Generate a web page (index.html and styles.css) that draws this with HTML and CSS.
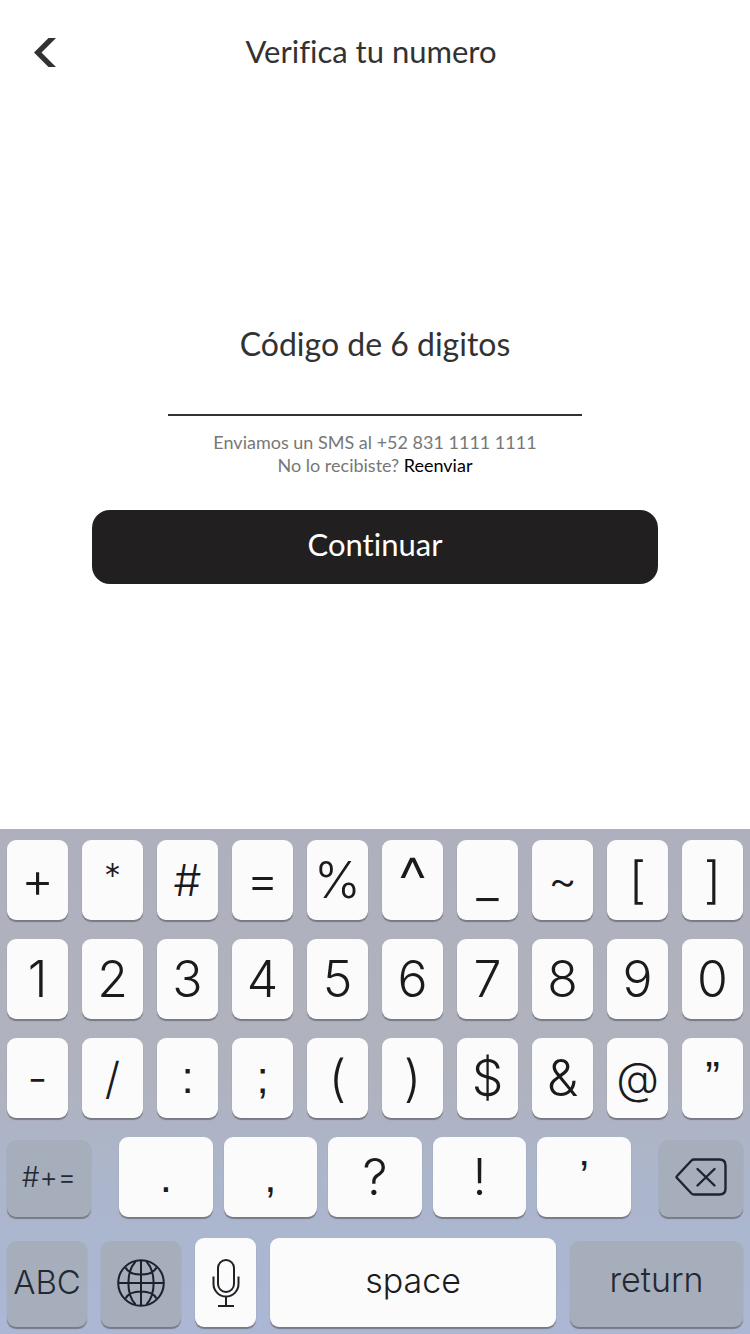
FILE: index.html
```html
<!DOCTYPE html>
<html lang="es">
<head>
<meta charset="utf-8">
<meta name="viewport" content="width=device-width, initial-scale=1">
<title>Verifica tu numero</title>
<link rel="stylesheet" href="styles.css">
</head>
<body class="screen">
<header class="topbar">
  <button class="back" type="button" aria-label="Atrás">
    <svg class="back-icon" viewBox="0 0 22 29" aria-hidden="true"><path d="M14.500 0H22L7.500 14.500 22 29h-7.500L0 14.500z" fill="#323233"/></svg>
  </button>
  <h1 class="title">Verifica tu numero</h1>
</header>
<main class="content">
  <form class="verify">
    <label class="code-label" for="code">Código de 6 digitos</label>
    <input class="code-input" id="code" type="text" inputmode="numeric" maxlength="6" autocomplete="one-time-code">
    <p class="hint">Enviamos un SMS al +52 831 1111 1111<br>No lo recibiste? <a class="resend" href="#">Reenviar</a></p>
    <button class="submit" type="button">Continuar</button>
  </form>
</main>
<section class="keyboard" aria-label="Teclado">
  <div class="row">
    <button class="key" type="button">+</button>
    <button class="key key-star" type="button">*</button>
    <button class="key key-compact" type="button">#</button>
    <button class="key" type="button">=</button>
    <button class="key" type="button">%</button>
    <button class="key key-caret" type="button">^</button>
    <button class="key" type="button">_</button>
    <button class="key key-compact" type="button">~</button>
    <button class="key" type="button">[</button>
    <button class="key" type="button">]</button>
  </div>
  <div class="row">
    <button class="key" type="button">1</button>
    <button class="key" type="button">2</button>
    <button class="key" type="button">3</button>
    <button class="key" type="button">4</button>
    <button class="key" type="button">5</button>
    <button class="key" type="button">6</button>
    <button class="key" type="button">7</button>
    <button class="key" type="button">8</button>
    <button class="key" type="button">9</button>
    <button class="key" type="button">0</button>
  </div>
  <div class="row">
    <button class="key key-compact" type="button">-</button>
    <button class="key key-compact" type="button">/</button>
    <button class="key key-mark" type="button">:</button>
    <button class="key key-mark" type="button">;</button>
    <button class="key" type="button">(</button>
    <button class="key" type="button">)</button>
    <button class="key" type="button">$</button>
    <button class="key" type="button">&amp;</button>
    <button class="key key-compact" type="button">@</button>
    <button class="key key-mark" type="button">”</button>
  </div>
  <div class="row row-punct">
    <button class="key key-fn key-symbols" type="button">#+=</button>
    <div class="punct">
      <button class="key key-mark" type="button">.</button>
      <button class="key key-mark" type="button">,</button>
      <button class="key" type="button">?</button>
      <button class="key" type="button">!</button>
      <button class="key key-mark" type="button">’</button>
    </div>
    <button class="key key-fn" type="button" aria-label="Borrar">
      <svg class="icon-delete" viewBox="0 0 52 38" aria-hidden="true" fill="none" stroke="#202431" stroke-width="2.400" stroke-linejoin="round" stroke-linecap="round"><path d="M19 1.500h25.500q6 0 6 6v23q0 6-6 6H19q-1.500 0-2.500-1L2 20q-1-1 0-2L16.500 2.500q1-1 2.500-1z"/><path d="M22.500 11l17 16.500M39.500 11l-17 16.500"/></svg>
    </button>
  </div>
  <div class="row row-bottom">
    <button class="key key-fn key-abc" type="button">ABC</button>
    <button class="key key-fn key-globe" type="button" aria-label="Cambiar idioma">
      <svg class="icon-globe" viewBox="0 0 48 48" aria-hidden="true" fill="none" stroke="#1d212c" stroke-width="2"><circle cx="24" cy="24" r="22.800"/><path d="M24 1.500v45M1.500 24h45M8.500 8.500Q12 15.500 24 15.500T39.500 8.500M8.500 39.500Q12 32.500 24 32.500T39.500 39.500M18.500 2.500C9 13 9 35 18.500 45.500M29.500 2.500C39 13 39 35 29.500 45.500"/></svg>
    </button>
    <button class="key" type="button" aria-label="Dictado">
      <svg class="icon-mic" viewBox="0 0 28 48" aria-hidden="true" fill="none" stroke="#202124" stroke-width="2"><rect x="6" y="1" width="16" height="32" rx="8"/><path d="M1.500 17.500V25a12.500 12.500 0 0 0 25 0v-7.500M14 37.500V47M6 47h16"/></svg>
    </button>
    <button class="key key-word" type="button">space</button>
    <button class="key key-fn key-word" type="button">return</button>
  </div>
</section>
</body>
</html>
```
FILE: styles.css
```css
* {
  box-sizing: border-box;
}

.screen {
  display: flex;
  flex-direction: column;
  min-height: 100vh;
  margin: 0;
  background: #fff;
  color: #323233;
  font-family: Lato, "Open Sans", sans-serif;
  font-variant-ligatures: none;
}

button {
  margin: 0;
  padding: 0;
  border: 0;
  background: none;
  color: inherit;
  font: inherit;
  font-variant-ligatures: none;
  cursor: pointer;
}

.topbar {
  display: grid;
  grid-template-columns: 56px 1fr 64px;
  align-items: center;
  height: 104px;
}

.back {
  display: flex;
  justify-content: flex-end;
}

.back-icon {
  width: 22px;
  height: 29px;
}

.title {
  margin: 0;
  padding-bottom: 2px;
  font-size: 31px;
  font-weight: 400;
  line-height: 40px;
  text-align: center;
}

.content {
  flex: 1;
  padding: 220px 92px 0;
}

.verify {
  display: flex;
  flex-direction: column;
  align-items: center;
}

.code-label {
  font-size: 32px;
  line-height: 40px;
}

.code-input {
  width: 73%;
  height: 52px;
  padding: 0;
  border: 0;
  border-bottom: 2px solid #323233;
  border-radius: 0;
  outline: 0;
  background: none;
  color: inherit;
  font: inherit;
  font-size: 32px;
  text-align: center;
}

.hint {
  margin: 15px 0 33px;
  color: #777;
  font-size: 18px;
  line-height: 23px;
  text-align: center;
}

.resend {
  color: #000;
  text-decoration: none;
}

.submit {
  width: 100%;
  height: 74px;
  padding-bottom: 6px;
  border-radius: 18px;
  background: #221f20;
  color: #fff;
  font-size: 31px;
}

.keyboard {
  display: flex;
  flex-direction: column;
  gap: 19px;
  padding: 11px 7px 7px;
  background: linear-gradient(#aeb0bd, #b0b2be 48%, #abb6cd 72%, #abb7d5);
  font-family: Inter, "Liberation Sans", sans-serif;
  font-weight: 300;
}

.row {
  display: grid;
  grid-template-columns: repeat(10, 1fr);
  gap: 14px;
  height: 80px;
}

.row-punct {
  grid-template-columns: 84fr 512fr 84fr;
  gap: 28px;
}

.punct {
  display: grid;
  grid-template-columns: repeat(5, 1fr);
  gap: 11px;
}

.row-bottom {
  grid-template-columns: 80fr 80fr 61fr 286fr 173fr;
  height: 89px;
  margin-top: 2px;
}

.key {
  display: flex;
  align-items: center;
  justify-content: center;
  min-width: 0;
  border-radius: 9px;
  background: #fbfbfc;
  box-shadow: 0 2px 1px #777a84;
  color: #1b1b1d;
  font-size: 50px;
  line-height: 60px;
}

.key-mark {
  font-family: "Liberation Sans", sans-serif;
  font-size: 44px;
}

.key-compact {
  font-size: 44px;
}

.key-star {
  padding-bottom: 8px;
  font-size: 34px;
}

.key-caret {
  font-size: 66px;
}

.key-fn {
  margin-top: 3px;
  padding-bottom: 4px;
  background: #a6aebb;
  color: #242833;
}

.key-symbols {
  font-size: 28px;
}

.key-abc {
  font-size: 33px;
}

.key-globe {
  padding-bottom: 2px;
}

.key-word {
  padding-bottom: 4px;
  font-size: 34px;
}

.key-fn.key-word {
  padding-bottom: 8px;
}

.icon-delete {
  width: 52px;
  height: 38px;
}

.icon-globe {
  width: 48px;
  height: 48px;
}

.icon-mic {
  width: 28px;
  height: 48px;
}
```
